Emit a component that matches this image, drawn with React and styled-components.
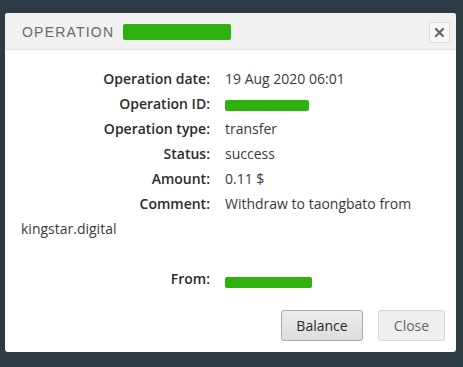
import React from 'react';
import styled, { createGlobalStyle } from 'styled-components';

const Global = createGlobalStyle`
  html, body {
    margin: 0;
    padding: 0;
    background: #2c3a43;
    width: 463px;
    height: 367px;
    overflow: hidden;
  }
`

const Page = styled.div`
  padding: 13px 7px 0 5px;
  font-family: "Open Sans", "Liberation Sans", sans-serif;
`

const Dialog = styled.div`
  width: 451px;
  height: 339px;
  background: #fff;
  border-radius: 3px;
  overflow: hidden;
  display: flex;
  flex-direction: column;
`

const Header = styled.div`
  height: 37px;
  flex: none;
  background: #f1f1f1;
  border-bottom: 1px solid #e6e6e6;
  display: flex;
  align-items: center;
  padding: 2px 6px 0 17px;
  box-sizing: border-box;
`

const Title = styled.span`
  font-family: "Liberation Sans", Arial, sans-serif;
  font-size: 14px;
  letter-spacing: 1.2px;
  color: #6a6a6a;
  display: flex;
  align-items: center;
  gap: 9px;
  flex: 1;
`

const Redact = styled.span`
  display: inline-block;
  background: #2eb10f;
  width: ${p => p.w}px;
  height: ${p => p.h}px;
  border-radius: 2px;
  vertical-align: ${p => p.va || 'middle'};
`

const CloseX = styled.button`
  width: 21px;
  height: 21px;
  border: 1px solid #dcdcdc;
  background: #f7f7f7;
  border-radius: 2px;
  padding: 0;
  display: flex;
  align-items: center;
  justify-content: center;
`

const Body = styled.div`
  flex: 1;
  padding: 16px 16px 0 16px;
  font-size: 14px;
  line-height: 25px;
  color: #333;
`

const Row = styled.div`
  margin-bottom: ${p => (p.gap ? 25 : 0)}px;
`

const Label = styled.span`
  display: inline-block;
  width: 189px;
  text-align: right;
  font-weight: 600;
  color: #2b2b2b;
  margin-right: 15px;
`

const Value = styled.span`
  color: #3a3a3a;
`

const Footer = styled.div`
  display: flex;
  justify-content: flex-end;
  gap: 15px;
  padding: 0 11px 11px 0;
`

const Button = styled.button`
  height: 31px;
  width: ${p => p.w}px;
  font-family: "Open Sans", "Liberation Sans", sans-serif;
  font-size: 14px;
  border-radius: 3px;
  border: 1px solid ${p => (p.primary ? '#a9a9a9' : '#d6d6d6')};
  background: ${p => (p.primary ? 'linear-gradient(#ececec, #dedede)' : '#efefef')};
  color: ${p => (p.primary ? '#2a2a2a' : '#666')};
`

function Field({ label, children, gap }) {
  return (
    <Row gap={gap}>
      <Label>{label}</Label>
      <Value>{children}</Value>
    </Row>
  )
}

export default function App() {
  return (
    <>
      <Global />
      <Page>
        <Dialog>
          <Header>
            <Title>
              OPERATION <Redact w={108} h={16} />
            </Title>
            <CloseX>
              <svg width="11" height="11" viewBox="0 0 11 11">
                <path d="M2 2 L9 9 M9 2 L2 9" stroke="#666" strokeWidth="2.2" strokeLinecap="round" />
              </svg>
            </CloseX>
          </Header>
          <Body>
            <Field label="Operation date:">19 Aug 2020 06:01</Field>
            <Field label="Operation ID:"><Redact w={84} h={11} /></Field>
            <Field label="Operation type:">transfer</Field>
            <Field label="Status:">success</Field>
            <Field label="Amount:">0.11 $</Field>
            <Field label="Comment:" gap>Withdraw to taongbato from kingstar.digital</Field>
            <Field label="From:"><Redact w={87} h={11} va="-4px" /></Field>
          </Body>
          <Footer>
            <Button primary w={82}>Balance</Button>
            <Button w={67}>Close</Button>
          </Footer>
        </Dialog>
      </Page>
    </>
  )
}
